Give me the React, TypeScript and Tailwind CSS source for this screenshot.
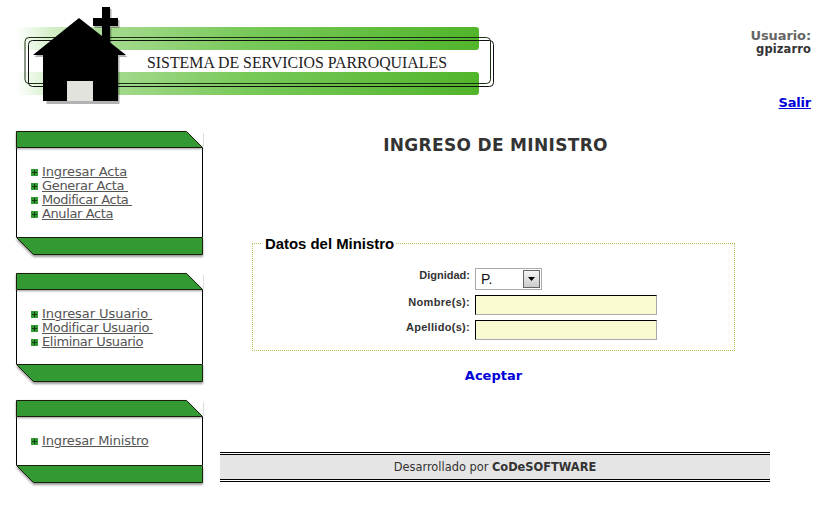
const menus = [
  {
    body: 'h-[89px]',
    items: [
      { text: 'Ingresar Acta', tracking: 'tracking-[-0.1px]' },
      { text: 'Generar Acta\u00a0', tracking: 'tracking-[-0.32px]' },
      { text: 'Modificar Acta\u00a0', tracking: 'tracking-[-0.45px]' },
      { text: 'Anular Acta', tracking: 'tracking-[-0.38px]' },
    ],
  },
  {
    body: 'h-[74px]',
    items: [
      { text: 'Ingresar Usuario\u00a0', tracking: 'tracking-[-0.06px]' },
      { text: 'Modificar Usuario\u00a0', tracking: 'tracking-[-0.36px]' },
      { text: 'Eliminar Usuario', tracking: 'tracking-[-0.35px]' },
    ],
  },
  { body: 'h-[48px]', items: [{ text: 'Ingresar Ministro', tracking: 'tracking-[-0.15px]' }] },
];

type MenuProps = (typeof menus)[number];

function Banner() {
  return (
    <svg width="500" height="112" viewBox="0 0 500 112" className="block shrink-0">
      <defs>
        <linearGradient id="band" gradientUnits="userSpaceOnUse" x1="16" y1="0" x2="479" y2="0">
          <stop offset="0" stopColor="#ffffff" />
          <stop offset="0.08" stopColor="#d2eec6" />
          <stop offset="0.2" stopColor="#a5da8f" />
          <stop offset="0.5" stopColor="#78c959" />
          <stop offset="1" stopColor="#51b52b" />
        </linearGradient>
      </defs>
      <path d="M16 27H476Q479 27 479 30V47Q479 50 476 50H16ZM16 72H476Q479 72 479 75V92Q479 95 476 95H16Z" fill="url(#band)" />
      <rect x="25" y="37.5" width="465.5" height="46" rx="4" fill="none" stroke="#1b3012" strokeWidth="1" />
      <rect x="28.5" y="40.5" width="465" height="46" rx="4" fill="none" stroke="#101010" strokeWidth="1" />
      <g fill="#000000" fillOpacity="0.3" transform="translate(1.5 2)">
        <path d="M33 55L79 18L126 55H118V102H45V55Z" />
        <path d="M102 7H110V18H118V26H110V42H102V26H93V18H102Z" />
      </g>
      <path d="M33 55L79 18L126 55H118V101H43V55Z" />
      <path d="M102 7H110V18H118V26H110V45H102V26H93V18H102Z" />
      <rect x="67" y="81" width="26" height="20" fill="#e2e3dc" />
      <text x="147" y="68" fontSize="17.5" fontFamily="'Liberation Serif', serif" textLength="300" lengthAdjust="spacingAndGlyphs" fill="#222222">
        SISTEMA DE SERVICIOS PARROQUIALES
      </text>
    </svg>
  );
}

function Bullet() {
  return (
    <svg width="7" height="7" viewBox="0 0 7 7" className="mt-1 block shrink-0">
      <rect width="7" height="7" fill="#339933" />
      <path d="M3 1h1v2h2v1H4v2H3V4H1V3h2z" fill="#0d3d0d" />
    </svg>
  );
}

function Menu({ body, items }: MenuProps) {
  return (
    <nav className="flex w-[187px] flex-col">
      <svg width="187" height="17" viewBox="0 0 187 17" className="block overflow-visible">
        <path d="M.5 .5H170.5L186.5 16.5H.5Z" fill="#339933" stroke="#1a1f08" className="drop-shadow-[0_1px_1px_rgba(0,0,0,0.4)]" />
        <path d="M187.5 2V16" stroke="#dddddd" />
      </svg>
      <ul className={`flex flex-col border-x border-black pl-[14px] pt-[17px] ${body}`}>
        {items.map((item) => (
          <li key={item.text} className="flex h-[14px] items-start gap-1">
            <Bullet />
            <a className={`whitespace-nowrap text-[13px] leading-[14px] text-[#555555] underline decoration-1 underline-offset-1 ${item.tracking}`}>{item.text}</a>
          </li>
        ))}
      </ul>
      <svg width="187" height="18" viewBox="0 0 187 18" className="block overflow-visible drop-shadow-[0_2px_1px_rgba(0,0,0,0.4)]">
        <path d="M.5 .5H186.5V17.5H17.5Z" fill="#339933" stroke="#1a1f08" />
      </svg>
    </nav>
  );
}

function Field({ label }: { label: string }) {
  return (
    <div className="flex h-[25px]">
      <label className="w-[218px] pr-px pt-px text-right font-['Liberation_Sans',sans-serif] text-[11px] font-bold leading-[13px] tracking-[0.3px] text-[#333333]">{label}</label>
      <input aria-label={label} className="ml-[4px] h-[20px] w-[182px] border border-b-[#aaaaaa] border-l-black border-r-[#aaaaaa] border-t-black bg-[#fafad2] px-1 text-[13px] outline-none" />
    </div>
  );
}

export default function App() {
  return (
    <div className="flex h-[506px] w-[830px] flex-col overflow-hidden bg-white font-['DejaVu_Sans',sans-serif] text-[#333333]">
      <header className="flex h-[131px] items-start justify-between pr-[19px]">
        <Banner />
        <div className="flex flex-col items-end pt-[28px] font-bold">
          <span className="text-[13px] leading-[15px] tracking-[-0.1px] text-[#666666]">Usuario:</span>
          <span className="text-[11.5px] leading-[13px] tracking-[0.1px]">gpizarro</span>
          <a className="mt-[39px] text-[13px] leading-[15px] tracking-[-0.2px] text-[#0000d8] underline">Salir</a>
        </div>
      </header>
      <div className="flex flex-1 pl-[16px]">
        <aside className="flex w-[204px] flex-col gap-[18px]">
          {menus.map((m) => (
            <Menu key={m.items[0].text} {...m} />
          ))}
        </aside>
        <main className="flex w-[550px] flex-col">
          <h1 className="mt-[4px] pl-[1px] text-center text-[17px] font-bold leading-[21px] tracking-[0.32px]">INGRESO DE MINISTRO</h1>
          <section className="ml-[32px] mt-[79px] h-[116px] w-[483px]">
            <div className="flex h-[16px] items-center">
              <span className="h-px w-[9px] border-t border-dotted border-[#b5bf55]" />
              <h2 className="pl-[4px] pr-[2px] pt-px font-['Liberation_Sans',sans-serif] text-[14.9px] font-bold leading-[16px] text-black">Datos del Ministro</h2>
              <span className="h-px flex-1 border-t border-dotted border-[#b5bf55]" />
            </div>
            <div className="-mt-2 h-[108px] border border-t-0 border-dotted border-[#b5bf55] pt-[25px]">
              <div className="flex h-[27px]">
                <label className="w-[218px] pr-px pt-px text-right font-['Liberation_Sans',sans-serif] text-[11px] font-bold leading-[13px] text-[#333333]">Dignidad:</label>
                <div className="ml-[4px] flex h-[22px] w-[67px] items-center justify-between border border-[#aaaaaa] bg-white pl-[5px] pr-px pt-px font-['Liberation_Sans',sans-serif] text-[14px] text-[#111111]">
                  <span>P.</span>
                  <span className="-mt-px flex h-[18px] w-[17px] items-center justify-center border border-[#666666] bg-gradient-to-b from-[#f4f4f4] to-[#cccccc]">
                    <svg width="7" height="4" viewBox="0 0 7 4"><path d="M0 0h7L3.5 4z" /></svg>
                  </span>
                </div>
              </div>
              <Field label="Nombre(s):" />
              <Field label="Apellido(s):" />
            </div>
          </section>
          <a className="mt-[17px] pr-[3px] text-center text-[13px] font-bold leading-[16px] text-[#0000d8]">Aceptar</a>
          <footer className="mt-[68px] flex h-[30px] items-center justify-center border-y-[3px] border-double border-black bg-[#e5e5e5] bg-clip-padding pt-px text-[11.4px]">
            <span>Desarrollado por <b>CoDeSOFTWARE</b></span>
          </footer>
        </main>
      </div>
    </div>
  );
}
